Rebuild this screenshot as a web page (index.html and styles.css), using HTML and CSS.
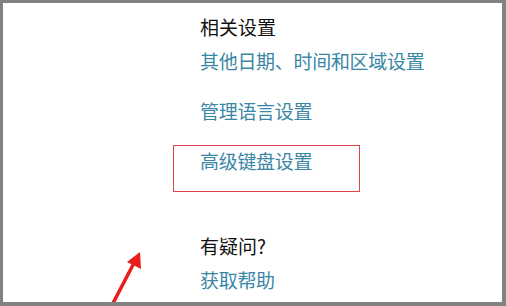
FILE: index.html
```html
<!DOCTYPE html>
<html lang="zh-CN">
<head>
    <meta charset="UTF-8">
    <title>相关设置</title>
    <link rel="stylesheet" href="styles.css">
</head>
<body>
    <div class="frame">
        <div class="settings">
            <div class="group">
                <h3>相关设置</h3>
                <a href="#">其他日期、时间和区域设置</a>
                <a href="#" class="spaced">管理语言设置</a>
                <a href="#" class="spaced">高级键盘设置</a>
            </div>
            <div class="group help">
                <h3>有疑问?</h3>
                <a href="#">获取帮助</a>
            </div>
        </div>

        <div class="mark-box"></div>
        <svg class="mark-arrow" width="60" height="60" viewBox="0 0 60 60">
            <line x1="14" y1="60" x2="37" y2="16" stroke="#ea1c1c" stroke-width="3.5" stroke-linecap="round"/>
            <polygon points="43,5 44,22 30,15" fill="#ea1c1c"/>
        </svg>
    </div>
</body>
</html>
```

FILE: styles.css
```css
body, html {
    margin: 0;
    padding: 0;
    background-color: #fff;
}
.frame {
    position: relative;
    box-sizing: border-box;
    width: 506px;
    height: 306px;
    border-style: solid;
    border-color: #828282;
    border-width: 3px 4px 4px 3px;
    overflow: hidden;
    font-family: "Noto Sans CJK SC", "Microsoft YaHei", sans-serif;
    font-size: 19px;
}
.settings {
    padding: 10px 0 0 197px;
}
.group h3 {
    margin: 0;
    font-size: 19px;
    font-weight: normal;
    line-height: 28px;
    color: #111;
}
.group a {
    display: block;
    margin-top: 6px;
    line-height: 28px;
    color: #3a87a5;
    text-decoration: none;
    letter-spacing: -0.3px;
}
.group a.spaced {
    margin-top: 22px;
}
.group.help {
    margin-top: 57px;
}
.mark-box {
    position: absolute;
    left: 170px;
    top: 142px;
    width: 185px;
    height: 45px;
    border: 1px solid #e0434b;
}
.mark-arrow {
    position: absolute;
    left: 94px;
    top: 244px;
}
```
